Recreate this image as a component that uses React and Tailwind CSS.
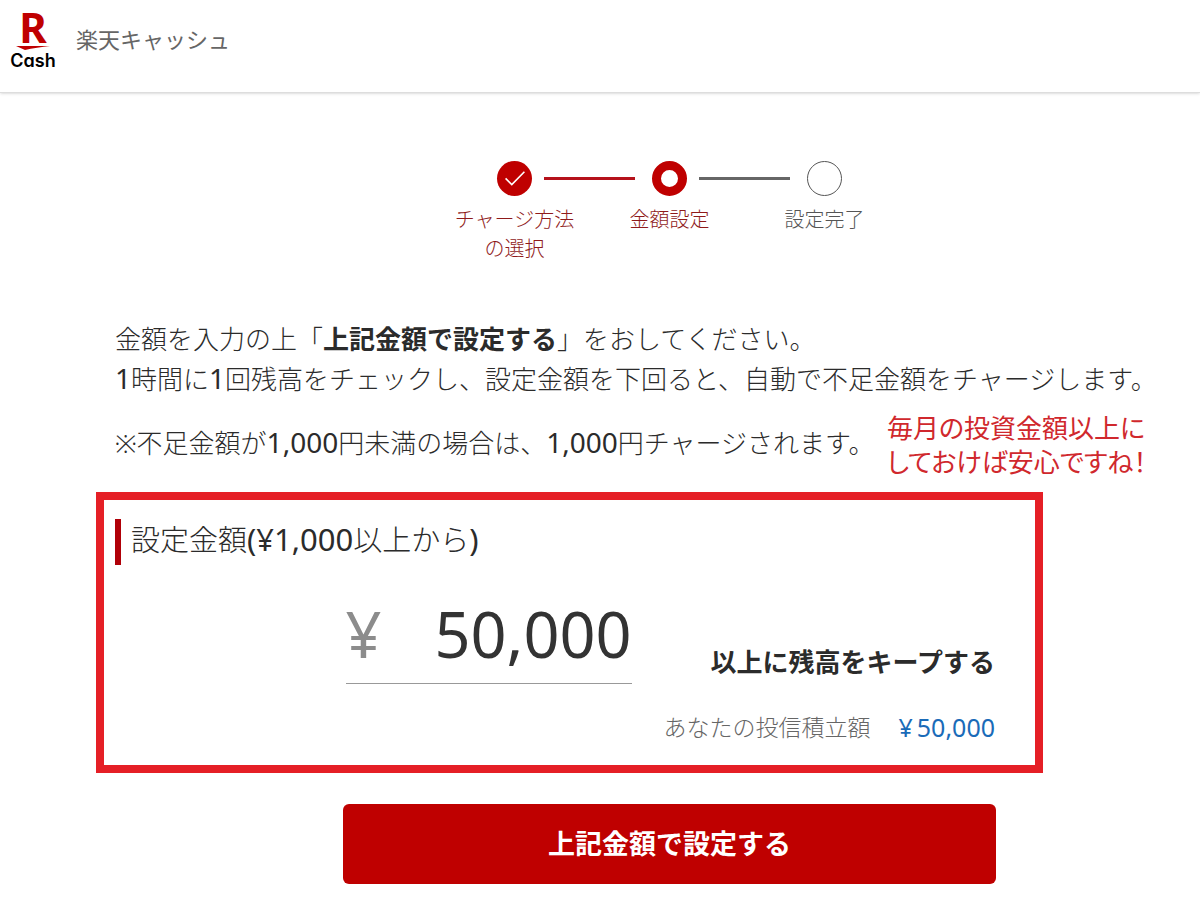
import { useState } from "react";

function Logo() {
  return (
    <a href="#top" aria-label="R Cash" className="flex w-[46px] flex-col items-center">
      <span className="text-[42px] leading-[30px] font-bold text-[#bf0000]">R</span>
      <svg viewBox="0 0 34 4" className="mt-1 mb-px h-1 w-[34px]" aria-hidden="true">
        <path d="M0 0H34C26 1 16 2.4 9 4Z" fill="#bf0000" />
      </svg>
      <span className="font-['Inter',sans-serif] text-[18px] leading-5 font-semibold text-black [font-feature-settings:'cv11']">
        Cash
      </span>
    </a>
  );
}

function StepMark({ state }) {
  if (state === "done") {
    return (
      <span className="flex size-[35px] shrink-0 items-center justify-center rounded-full bg-[#bf0000]">
        <svg viewBox="0 0 20 15" className="h-[15px] w-5" fill="none" stroke="white" strokeWidth="1.6" aria-hidden="true">
          <path d="M0.6 7.4L6.8 13.6L19.4 0.8" />
        </svg>
      </span>
    );
  }
  if (state === "current") {
    return <span className="size-[35px] shrink-0 rounded-full border-[9px] border-[#bf0000] bg-white" />;
  }
  return <span className="size-[35px] shrink-0 rounded-full border border-[#555555] bg-white" />;
}

const steps = [
  { label: ["チャージ方法", "の選択"], state: "done", before: "", after: "bg-[#b5121b]", text: "text-[#8f1a1a]" },
  { label: ["金額設定"], state: "current", before: "bg-[#b5121b]", after: "bg-[#666666]", text: "text-[#8f1a1a]" },
  { label: ["設定完了"], state: "todo", before: "bg-[#666666]", after: "", text: "text-[#555555]" },
];

function Stepper() {
  return (
    <ol className="flex justify-center pl-[139px]">
      {steps.map((s) => (
        <li key={s.label[0]} className="flex w-[155px] flex-col items-center">
          <div className="flex items-center">
            <span className="w-[60px] pr-[17px]">
              <span className={"block h-[3px] " + s.before} />
            </span>
            <StepMark state={s.state} />
            <span className="w-[60px] pl-3">
              <span className={"block h-[3px] " + s.after} />
            </span>
          </div>
          <p className={"mt-[9px] text-center text-[20px] leading-[29px] " + s.text}>
            {s.label.map((l) => (
              <span key={l} className="block">{l}</span>
            ))}
          </p>
        </li>
      ))}
    </ol>
  );
}

function Num({ children }) {
  return <span className="text-[28px] leading-none font-normal">{children}</span>;
}

function HeadingNum({ children }) {
  return <span className="text-[31px] leading-none font-normal">{children}</span>;
}

export default function App() {
  const [amount, setAmount] = useState("50,000");
  return (
    <div id="top" className="min-h-screen bg-white font-['Noto_Sans','Noto_Sans_CJK_JP',sans-serif] font-light text-[#2b2b2b]">
      <header className="flex h-[93px] items-start gap-5 border-b border-[#dddddd] px-[10px] pt-3 shadow-sm">
        <Logo />
        <p className="pt-[11px] text-[22px] leading-8 font-normal text-[#666666]">楽天キャッシュ</p>
      </header>
      <main className="pt-[68px] pb-[35px]">
        <Stepper />
        <div className="mt-14 pl-[115px] text-[26px] leading-10">
          <p>
            金額を入力の上「<b className="font-bold">上記金額で設定する</b>」をおしてください。
            <br />
            <Num>1</Num>時間に<Num>1</Num>回残高をチェックし、設定金額を下回ると、自動で不足金額をチャージします。
          </p>
          <div className="mt-3 flex items-start">
            <p className="w-[772px] pt-3 whitespace-nowrap">
              ※不足金額が<Num>1,000</Num>円未満の場合は、<Num>1,000</Num>円チャージされます。
            </p>
            <p className="text-[26px] leading-[34px] font-normal whitespace-nowrap text-[#d0282d] [font-feature-settings:'palt']">
              毎月の投資金額以上に
              <br />
              しておけば安心ですね！
            </p>
          </div>
        </div>
        <section className="mt-[13px] mr-[157px] ml-24 border-8 border-[#e51f26] pt-[19px] pr-10 pb-[18px] pl-[11px]">
          <h1 className="border-l-[6px] border-[#b00008] pb-1 pl-[10px] text-[29px] leading-[42px]">
            <label htmlFor="amount">
              設定金額<HeadingNum>(¥1,000</HeadingNum>以上から<HeadingNum>)</HeadingNum>
            </label>
          </h1>
          <div className="mt-6 flex items-end justify-end gap-[79px]">
            <div className="flex w-[286px] items-center border-b border-[#999999] pb-1 text-[63px] leading-[90px] font-normal">
              <span className="text-[#8c8c8c]">¥</span>
              <input
                id="amount"
                type="text"
                inputMode="numeric"
                value={amount}
                onChange={(e) => setAmount(e.target.value)}
                className="h-[90px] w-full min-w-0 bg-transparent text-right text-[#333333] outline-none"
              />
            </div>
            <p className="pb-[2px] text-[26px] leading-10 font-bold whitespace-nowrap">以上に残高をキープする</p>
          </div>
          <p className="mt-[23px] flex items-center justify-end text-[23px] leading-10 text-[#666666]">
            あなたの投信積立額
            <span className="ml-7 flex gap-1 text-[25px] font-normal text-[#1a6bb8]">
              <span>¥</span>
              <span>50,000</span>
            </span>
          </p>
        </section>
        <div className="mt-[31px] mr-[204px] ml-[343px]">
          <button type="button" className="h-20 w-full rounded-md bg-[#bf0000] text-[27px] font-bold text-white">
            上記金額で設定する
          </button>
        </div>
      </main>
    </div>
  );
}
